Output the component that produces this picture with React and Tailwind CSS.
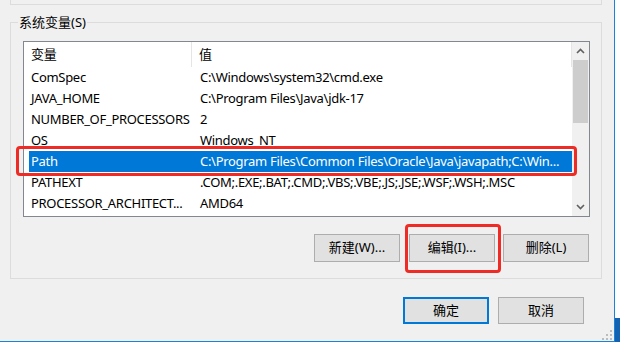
import React from "react";

const rows = [
  ["ComSpec", "C:\\Windows\\system32\\cmd.exe"],
  ["JAVA_HOME", "C:\\Program Files\\Java\\jdk-17"],
  ["NUMBER_OF_PROCESSORS", "2"],
  ["OS", "Windows_NT"],
  ["Path", "C:\\Program Files\\Common Files\\Oracle\\Java\\javapath;C:\\Win..."],
  ["PATHEXT", ".COM;.EXE;.BAT;.CMD;.VBS;.VBE;.JS;.JSE;.WSF;.WSH;.MSC"],
  ["PROCESSOR_ARCHITECT...", "AMD64"],
];

const font = "font-['Noto_Sans','Noto_Sans_CJK_SC',sans-serif]";

function Btn({ children, primary, h = "h-[28px]" }) {
  return (
    <div
      className={`w-[86px] ${h} flex items-center justify-center bg-[#e1e1e1] text-[13px] text-black ${
        primary ? "border-2 border-[#0078d7]" : "border border-[#adadad]"
      }`}
    >
      {children}
    </div>
  );
}

export default function App() {
  return (
    <div className={`w-[620px] h-[342px] flex bg-white overflow-hidden relative ${font}`}>
      <div className="w-[615px] h-[342px] border-r border-b border-[#1883d7] bg-[#f0f0f0] flex flex-col relative">
        <div className="ml-[10px] w-[592px] h-[5px] border-x border-b border-[#dcdcdc]" />
        <div className="mt-[17px] ml-[10px] w-[592px] h-[257px] border border-[#dcdcdc] relative pt-[18px] pl-[12px]">
          <div className="absolute left-[7px] top-[-11px] px-[1px] bg-[#f0f0f0] text-[13px] leading-[20px] text-black">
            系统变量(S)
          </div>
          <div className="w-[567px] h-[176px] border border-[#828790] bg-white flex">
            <div className="flex-1 flex flex-col pl-[5px] text-[13px] tracking-[-0.3px] text-black">
              <div className="h-[25px] flex items-center">
                <div className="w-[163px] pl-[2px] h-full flex items-center border-r border-[#e5e5e5]">变量</div>
                <div className="flex-1 pl-[7px] h-full flex items-center border-r border-[#e5e5e5]">值</div>
              </div>
              {rows.map(([k, v]) => (
                <div
                  key={k}
                  className={`h-[21px] flex items-center whitespace-nowrap ${
                    k === "Path" ? "bg-[#0078d7] text-white" : ""
                  }`}
                >
                  <div className="w-[163px] pl-[2px]">{k}</div>
                  <div className="flex-1 pl-[8px] overflow-hidden">{v}</div>
                </div>
              ))}
            </div>
            <div className="w-[17px] bg-[#f0f0f0] flex flex-col items-center">
              <div className="h-[18px] w-full flex items-center justify-center">
                <svg width="9" height="6" viewBox="0 0 9 6">
                  <path d="M1 5 L4.5 1.5 L8 5" fill="none" stroke="#606060" strokeWidth="1.6" />
                </svg>
              </div>
              <div className="w-[15px] h-[63px] bg-[#cdcdcd]" />
              <div className="flex-1" />
              <div className="h-[18px] w-full flex items-center justify-center">
                <svg width="9" height="6" viewBox="0 0 9 6">
                  <path d="M1 1 L4.5 4.5 L8 1" fill="none" stroke="#606060" strokeWidth="1.6" />
                </svg>
              </div>
            </div>
          </div>
          <div className="mt-[17px] flex pl-[291px] gap-[9px]">
            <Btn>新建(W)...</Btn>
            <Btn>编辑(I)...</Btn>
            <div className="-ml-[1px]">
              <Btn>删除(L)</Btn>
            </div>
          </div>
        </div>
        <div className="mt-[18px] flex pl-[403px] gap-[9px]">
          <Btn primary h="h-[27px]">确定</Btn>
          <Btn h="h-[27px]">取消</Btn>
        </div>
        <svg className="absolute right-[2px] bottom-[1px]" width="10" height="10" viewBox="0 0 10 10">
          <rect x="8" y="0" width="2" height="2" fill="#bcbcbc" />
          <rect x="4" y="4" width="2" height="2" fill="#bcbcbc" />
          <rect x="8" y="4" width="2" height="2" fill="#bcbcbc" />
          <rect x="0" y="8" width="2" height="2" fill="#bcbcbc" />
          <rect x="4" y="8" width="2" height="2" fill="#bcbcbc" />
          <rect x="8" y="8" width="2" height="2" fill="#bcbcbc" />
        </svg>
        <div className="absolute left-[16px] top-[146px] w-[561px] h-[30px] border-[3px] border-[#ee2b24] rounded-[4px]" />
        <div className="absolute left-[405px] top-[224px] w-[96px] h-[49px] border-[3px] border-[#ee2b24] rounded-[4px]" />
      </div>
      <div className="w-[5px] h-[342px] flex flex-col">
        <div className="flex-1 bg-white" />
        <div className="h-[24px] bg-[#1561b1]" />
      </div>
    </div>
  );
}
